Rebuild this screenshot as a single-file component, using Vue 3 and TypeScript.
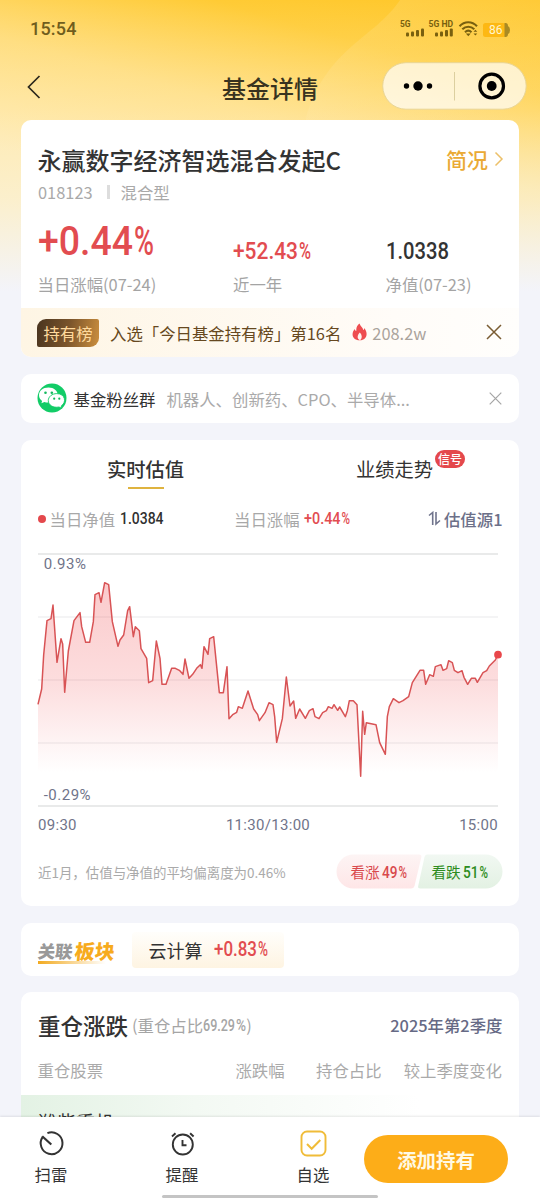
<script setup lang="ts">
import { computed, defineComponent, h } from 'vue'

/* Condensed figures: glyphs are fitted to a fixed run width. */
const Num = defineComponent({
  props: {
    text: { type: String, required: true },
    pct: { type: Number, default: 0 },
    width: { type: Number, required: true },
    size: { type: Number, required: true },
    weight: { type: Number, default: 500 },
  },
  setup(p) {
    return () => {
      const base = Math.round(p.size * 0.8)
      const run = (x: number, w: number, t: string, weight: number) =>
        h('text', {
          x, y: base, textLength: w, lengthAdjust: 'spacingAndGlyphs', fill: 'currentColor',
          'font-family': 'Roboto, sans-serif', 'font-size': p.size, 'font-weight': weight,
        }, t)
      const main = p.width - p.pct
      return h('svg', { width: p.width, height: Math.round(p.size), style: { display: 'block', overflow: 'visible', flex: 'none' } }, [
        run(0, p.pct ? main - 1 : main, p.text, p.weight),
        p.pct ? run(main, p.pct, '%', p.weight) : null,
      ])
    }
  },
})

const series: [number, number][] = [
  [0,451],[11,405],[17,303],[27,200],[39,194],[45,153],[57,325],[69,254],[74,270],[80,415],[91,291],[108,200],[126,176],[131,218],[143,265],[155,265],[166,203],[171,122],[183,116],[189,145],[200,86],[212,92],[223,203],[240,277],[246,258],[257,243],[269,170],[275,158],[286,248],[292,218],[304,230],[309,284],[326,313],[332,386],[344,380],[355,261],[366,313],[372,391],[384,391],[401,343],[412,343],[424,349],[435,361],[441,315],[453,373],[464,361],[476,343],[487,332],[492,343],[498,278],[510,301],[515,254],[527,248],[544,416],[556,416],[567,338],[573,494],[584,482],[596,475],[601,458],[613,463],[630,411],
  [647,465],[659,482],[664,500],[681,476],[693,446],[705,452],[710,488],[716,565],[733,494],[745,369],[756,456],[767,441],[773,493],[785,465],[802,493],[814,470],[825,464],[831,488],[843,494],[854,476],[865,470],[871,458],[882,463],[888,452],[899,469],[905,459],[922,488],[928,470],[934,440],[946,440],[957,452],[968,667],[974,472],[980,541],[985,506],[1014,512],[1025,566],[1042,601],[1048,488],[1054,458],[1066,434],[1083,446],[1095,440],[1112,428],[1123,386],[1146,349],[1157,349],[1163,391],[1175,362],[1186,367],[1192,338],[1209,332],[1215,349],[1226,344],[1232,320],[1243,326],[1249,349],[1260,356],[1272,350],[1278,370],[1289,391],[1300,373],[1312,373],[1318,385],[1335,356],[1346,350],[1354,336],[1372,318],[1380,302],
]
const line = computed(() => 'M' + series.map(p => p.join(' ')).join('L'))
const area = computed(() => line.value + 'L1380 667L0 667Z')
</script>

<template>
  <div class="page">
    <svg class="glow" width="540" height="300" viewBox="0 0 540 300">
      <defs>
        <linearGradient id="arc" x1="0" y1="0" x2="0.3" y2="1">
          <stop offset="0" stop-color="#fff" stop-opacity=".14" />
          <stop offset=".6" stop-color="#fff" stop-opacity="0" />
        </linearGradient>
      </defs>
      <path d="M400 0C375 38 326 48 306 118V300H540V0Z" fill="url(#arc)" />
    </svg>
    <header class="top">
      <div class="status">
        <span class="time">15:54</span>
        <svg class="sig" width="112" height="22" viewBox="0 0 112 22" fill="#79600f">
          <text x="0" y="8.500" class="net" textLength="10.500" lengthAdjust="spacingAndGlyphs">5G</text>
          <rect x="6" y="14.500" width="3" height="4" rx="1" /><rect x="11" y="13.500" width="3" height="5" rx="1" /><rect x="16" y="12" width="3" height="6.500" rx="1" /><rect x="21" y="10.500" width="3" height="8" rx="1" />
          <text x="28.500" y="8.500" class="net" textLength="24.500" lengthAdjust="spacingAndGlyphs">5G HD</text>
          <rect x="35" y="14.500" width="3" height="4" rx="1" /><rect x="40" y="13.500" width="3" height="5" rx="1" /><rect x="45" y="12" width="3" height="6.500" rx="1" /><rect x="49.800" y="10.500" width="3" height="8" rx="1" />
          <g fill="none" stroke="#79600f" stroke-width="2.1">
            <path d="M59.500 8.200C64.500 2.900 72 2.900 77 8.200" /><path d="M62.300 11.300C65.800 7.800 70.800 7.800 74.300 11.300" /><path d="M65 14.200C67 12.300 69.500 12.300 71.500 14.200" />
          </g>
          <path d="M65.800 15.600H70.800L68.300 18.300ZM73.500 13.800L75.400 11.800L77.300 13.800ZM73.500 15.600L75.400 17.600L77.300 15.600Z" />
          <rect x="83" y="5" width="22.500" height="14" rx="2.500" fill="#fdb813" />
          <path d="M104.500 5H105.500Q108 5 108 8Q110 9 110 12Q110 15 108 16Q108 19 105.500 19H104.500Z" fill="#a98a24" />
          <text x="89" y="16.300" class="bat">86</text>
        </svg>
      </div>
      <div class="nav">
        <svg class="back" width="16" height="26" viewBox="0 0 16 26"><path d="M13.500 2L2.500 13L13.500 24" fill="none" stroke="#2c281c" stroke-width="1.700" /></svg>
        <h1>基金详情</h1>
        <svg class="capsule" width="145" height="48" viewBox="0 0 145 48">
          <rect x=".7" y=".7" width="143.500" height="46.500" rx="23.250" fill="#fff" fill-opacity=".7" stroke="#e9d595" stroke-width="1" />
          <path d="M72.500 10V38.500" stroke="#dccf9f" /><circle cx="24.500" cy="24" r="2.700" /><circle cx="36" cy="24" r="4.700" /><circle cx="47.500" cy="24" r="2.700" />
          <circle cx="109.700" cy="24" r="11.800" fill="none" stroke="#000" stroke-width="3.200" /><circle cx="109.700" cy="24" r="4.900" />
        </svg>
      </div>
    </header>

    <main>
      <section class="card fund">
        <div class="row name"><h2>永赢数字经济智选混合发起C</h2>
          <span class="brief">简况<svg width="10" height="16" viewBox="0 0 10 16"><path d="M1.500 1.500L8 8L1.500 14.500" fill="none" stroke="#ecc06a" stroke-width="1.500" /></svg></span>
        </div>
        <div class="code"><span>018123</span><i></i><span>混合型</span></div>
        <div class="stats">
          <div><div class="val up"><Num text="+0.44" :pct="20" :width="116" :size="41.5" /></div><p>当日涨幅(07-24)</p></div>
          <div><div class="val small up"><Num text="+52.43" :pct="12" :width="78" :size="24.800" /></div><p>近一年</p></div>
          <div><div class="val small"><Num text="1.0338" :width="63" :size="24.800" /></div><p>净值(07-23)</p></div>
        </div>
        <div class="banner">
          <span class="tag">持有榜</span><span class="rank">入选「今日基金持有榜」第16名</span>
          <svg class="fire" width="15" height="18" viewBox="0 0 15 18"><path d="M7.500 .4C8.500 3.400 11 4.300 11.200 7C12 6.600 12.200 5.800 12.200 5C16.800 10.500 14.500 17 7.800 17.300C0 17.300-1.200 10.200 2.800 6C3 7.200 3.300 7.700 4.300 8C4 4.500 5.200 2 7.500 .4Z" fill="#ee4d50" /><path d="M7.800 9.500C9.500 11.300 11 14.700 8 17.300C4.500 15.700 5.300 12 7.800 9.500Z" fill="#fff2ee" /></svg>
          <span class="heat">208.2w</span>
          <svg class="x" width="16" height="16" viewBox="0 0 16 16"><path d="M1 1L15 15M15 1L1 15" stroke="#7a5c33" stroke-width="1.500" /></svg>
        </div>
      </section>

      <section class="card group">
        <svg width="30" height="30" viewBox="0 0 30 30">
          <circle cx="15" cy="15" r="14.500" fill="#12cc67" />
          <path d="M11.500 4.600C5.800 4.600 2 8 2 12.200C2 14.500 3.200 16.500 5.100 17.900L4.400 20.300L7.400 18.900C12.500 20.800 21 18 20.800 12C20.600 8 17 4.600 11.500 4.600Z" fill="#fff" />
          <path d="M19.800 10.600C15 10.600 11.300 13.700 11.300 17.600C11.300 22 16 25.200 22 24L24.800 25.300L24.200 23C29.800 19.500 28.400 10.600 19.800 10.600Z" fill="#fff" stroke="#12cc67" stroke-width=".9" />
          <g fill="#12b95d"><circle cx="8.500" cy="9.800" r="1.300" /><circle cx="14.800" cy="9.800" r="1.300" /><circle cx="17.200" cy="15.700" r="1.100" /><circle cx="22.300" cy="15.700" r="1.100" /></g>
        </svg>
        <b>基金粉丝群</b><span>机器人、创新药、CPO、半导体...</span>
        <svg class="x" width="13" height="13" viewBox="0 0 13 13"><path d="M.7 .7L12.300 12.300M12.300 .7L.7 12.300" stroke="#a5a5a5" stroke-width="1.200" /></svg>
      </section>

      <section class="card chart">
        <nav class="tabs"><span class="on">实时估值</span><span class="perf">业绩走势<em>信号</em></span></nav>
        <div class="legend">
          <i class="dot"></i><span>当日净值</span><Num class="dark" text="1.0384" :width="43.5" :size="16.8" />
          <span class="l2">当日涨幅</span><Num class="up" text="+0.44" :pct="8.500" :width="46" :size="16.8" />
          <span class="src"><svg width="13" height="15" viewBox="0 0 13 15"><path d="M1 4.500L4.700 1.500V14M8 1V13L12 9.500" fill="none" stroke="#70748c" stroke-width="1.600" /></svg>估值源1</span>
        </div>
        <div class="plot">
          <svg width="460" height="252" viewBox="0 0 1380 756">
            <defs><linearGradient id="fade" gradientUnits="userSpaceOnUse" x1="0" y1="60" x2="0" y2="656"><stop offset="0" stop-color="#f04448" stop-opacity=".29" /><stop offset=".55" stop-color="#f04448" stop-opacity=".18" /><stop offset="1" stop-color="#f04448" stop-opacity="0" /></linearGradient></defs>
            <path d="M0 189H1380M0 378H1380M0 567H1380" stroke="#f1f1f2" stroke-width="4" />
            <path d="M0 0H1380M0 756H1380" stroke="#e2e3e4" stroke-width="4" />
            <path :d="area" fill="url(#fade)" />
            <path :d="line" fill="none" stroke="#d85355" stroke-width="4.500" stroke-linejoin="round" />
            <circle cx="1380" cy="302" r="11.500" fill="#e9474b" />
          </svg>
          <span class="hi">0.93%</span><span class="lo">-0.29%</span>
        </div>
        <div class="axis"><span>09:30</span><span>11:30/13:00</span><span>15:00</span></div>
        <div class="vote">
          <p>近1月，估值与净值的平均偏离度为0.46%</p>
          <div class="pills">
            <svg width="167" height="35" viewBox="0 0 167 35">
              <defs>
                <linearGradient id="pr" x2="0" y2="1"><stop stop-color="#fdf4f4" /><stop offset="1" stop-color="#fee6e7" /></linearGradient>
                <linearGradient id="pg" x2="0" y2="1"><stop stop-color="#f1f8f2" /><stop offset="1" stop-color="#e3f1e3" /></linearGradient>
              </defs>
              <path d="M17.500 .5H83Q86 .5 85.300 3.200L78.500 32Q77.800 34.500 75 34.500H17.500A17 17 0 0 1 17.500 .5Z" fill="url(#pr)" />
              <path d="M91 .5H149.500A17 17 0 0 1 149.500 34.500H84.500Q81.500 34.500 82.200 32L88.500 3Q89 .5 91 .5Z" fill="url(#pg)" />
            </svg>
            <div class="votes"><span class="bull">看涨<Num text="49" :pct="8.500" :width="25" :size="17" /></span><span class="bear">看跌<Num text="51" :pct="8.500" :width="25" :size="17" /></span></div>
          </div>
        </div>
      </section>

      <section class="card sector">
        <div class="brand"><span>关联</span><b>板块</b><i></i></div>
        <div class="chip">云计算<Num class="up" text="+0.83" :pct="10" :width="54" :size="20" /></div>
      </section>

      <section class="card hold">
        <div class="row head"><h3>重仓涨跌</h3><span class="ratio">(重仓占比<Num text="69.29" :pct="10" :width="43" :size="16.8" />)</span><span class="season">2025年第2季度</span></div>
        <div class="cols"><span>重仓股票</span><span>涨跌幅</span><span>持仓占比</span><span>较上季度变化</span></div>
        <div class="stock">潍柴重机</div>
      </section>
    </main>

    <footer>
      <div class="act"><svg width="28" height="28" viewBox="0 0 28 28" fill="none" stroke="#333" stroke-width="2"><path d="M10.400 4.200A10.900 10.900 0 1 1 5.600 8.100" /><path d="M5.200 7.200L14.300 15.500" stroke-width="2.200" /></svg>扫雷</div>
      <div class="act"><svg width="28" height="28" viewBox="0 0 28 28" fill="none" stroke="#333" stroke-width="1.900"><circle cx="14.800" cy="15.500" r="10" /><path d="M14.500 11V16.300H18.500M4 7.500L7.500 4.200M25.600 7.500L22.100 4.200" /></svg>提醒</div>
      <div class="act"><svg width="28" height="28" viewBox="0 0 28 28" fill="none" stroke="#f0bc38" stroke-width="1.900"><rect x="2.500" y="2.500" width="24" height="24" rx="5.500" /><path d="M8 15L12.700 19.800L21.300 11" stroke-width="2" /></svg>自选</div>
      <button>添加持有</button>
      <div class="home"></div>
    </footer>
  </div>
</template>

<style>
body { margin: 0; }
</style>
<style scoped>
* { box-sizing: border-box; }
h1, h2, h3, p { margin: 0; font-weight: 500; }
i, em { font-style: normal; }
svg { display: block; flex: none; }
.page { position: relative; display: flex; flex-direction: column; width: 540px; height: 1200px; overflow: hidden; color: #333; font: 16.4px/24px "Noto Sans CJK SC", sans-serif;
  background: linear-gradient(180deg, rgba(255,246,220,0) 0, rgba(255,246,220,.3) 110px, rgba(249,245,230,.65) 200px, #f3f4fa 292px), linear-gradient(196deg, #ffc627 0, #ffcb35 90px, #ffdb76 185px, #ffe59e 290px) #f3f4fa; }
.glow { position: absolute; left: 0; top: 0; }
.top { position: relative; flex: none; height: 120px; }
.status { display: flex; justify-content: space-between; height: 62px; padding: 18px 28px 0 30px; }
.time { color: #705d1d; font: 500 18px/22px Roboto, sans-serif; letter-spacing: .2px; }
.net { font: 700 8.600px Roboto, sans-serif; }
.bat { font: 400 12px Roboto, sans-serif; fill: #fff6d0; }
.nav { display: grid; grid-template-columns: 196px 1fr 145px; align-items: start; padding: 0 12px 0 26px; height: 48px; }
.nav h1 { color: #38331f; font-size: 24px; line-height: 52px; }
.nav .capsule { margin-left: -1px; }
.nav .back { margin-top: 12px; }
main { position: relative; flex: 1; min-height: 0; overflow: hidden; display: flex; flex-direction: column; gap: 16.5px; padding: 0 21px; }
.card { flex: none; background: #fff; border-radius: 10px; overflow: hidden; }
.row { display: flex; align-items: center; }
.up { color: #e24c50; }
.fund { height: 237px; }
.name { height: 34px; margin: 23px 15px 0 16.500px; justify-content: space-between; }
h2 { font-size: 24px; color: #333; }
.brief { display: flex; align-items: center; gap: 6px; height: 30px; margin-top: -3px; font-size: 21px; font-weight: 500; color: #eaaa35; }
.code { display: flex; align-items: center; height: 24px; margin: 3px 17px 0 17px; color: #a9a9a9; }
.code i { width: 3px; height: 14px; margin: 0 11px 0 14px; background: #ddd; }
.stats { display: grid; grid-template-columns: 195.500px 152.500px 1fr; margin-left: 16.500px; height: 103.500px; }
.stats p { color: #a4a4a4; line-height: 24px; font-weight: 400; margin-top: 1px; }
.val { display: flex; align-items: flex-start; height: 67px; padding-top: 18px; }
.val.small { padding-top: 35px; }
.banner { display: flex; align-items: center; height: 49.500px; padding: 1px 17px 0 16px; background: linear-gradient(90deg, #fef5e4, #fffcf8 75%, #fffefc); }
.tag { width: 62px; height: 28px; border-radius: 9px 2px 9px 2px; text-align: center; line-height: 28px; color: #ffd99c; background: linear-gradient(100deg, #49341f, #7a542b 50%, #cc8f3e); }
.rank { margin-left: 11px; color: #664820; }
.fire { margin: -2px 5px 0 11px; }
.heat { color: #aaa39c; }
.banner .x { margin: -2px 0 0 auto; }
.x { margin-left: auto; }
.group { display: flex; align-items: center; height: 49.500px; padding: 1px 17px 0 15.500px; }
.group > svg:first-child { margin-top: -2px; }
.group b { margin-left: 7px; font-weight: 400; }
.group span { margin-left: 11px; color: #aaa; }
.chart { height: 466.500px; padding: 0 17px; }
.tabs { display: flex; height: 49px; padding: 15px 0 0 69px; font-size: 19.300px; line-height: 28px; }
.on { font-weight: 500; width: 78px; height: 34px; background: linear-gradient(#dfb33f, #dfb33f) center bottom / 36px 2px no-repeat; }
.perf { position: relative; margin-left: 171px; }
.perf em { position: absolute; left: 79px; top: -5px; width: 30px; height: 18px; border-radius: 9px; background: #e4484c; color: #fff; font-size: 12px; font-weight: 500; line-height: 18px; text-align: center; }
.legend { display: flex; align-items: center; height: 60px; color: #a8a8a8; }
.dot { width: 8px; height: 8px; margin-right: 4px; margin-left: -.5px; border-radius: 50%; background: #e4484c; }
.dark { color: #303030; margin: 2px 0 0 5px; }
.l2 { margin-left: 70.500px; }
.legend .up { margin: 2px 0 0 4.500px; }
.src { display: flex; align-items: center; gap: 3px; margin: 0 -.5px 0 auto; color: #6c7089; font-weight: 500; }
.plot { position: relative; height: 252px; margin: 5px 0 0 -.3px; }
.plot svg { overflow: visible; }
.plot span, .axis { font: 400 15px/18px Roboto, sans-serif; letter-spacing: .3px; color: #70748a; }
.plot span { position: absolute; left: 6px; letter-spacing: .5px; }
.plot .hi { top: 1px; }
.plot .lo { bottom: 2px; }
.axis { display: flex; justify-content: space-between; height: 38px; padding: 10px 4px 0 0; }
.vote { display: flex; justify-content: space-between; align-items: center; height: 56px; margin-right: -.5px; }
.vote p { font-size: 13.450px; font-weight: 400; color: #aaa; }
.pills { display: grid; grid-template-columns: 167px; }
.pills > * { grid-area: 1 / 1; }
.votes { display: flex; align-items: center; padding: 1px 0 0 15px; font-size: 14.600px; }
.votes span { display: flex; align-items: center; gap: 2px; }
.bull { width: 81px; color: #d9494c; }
.bear { color: #2c8c20; }
.sector { display: flex; align-items: center; height: 53px; padding: 1px 17px 0; }
.brand { display: grid; grid-template-columns: 37px 42px; grid-template-rows: 22px 3px; margin-top: 3px; font-weight: 900; line-height: 24px; }
.brand span { color: #999; font-size: 17.400px; transform: skewX(-6deg); }
.brand b { color: #f7ab1d; font-size: 20px; transform: skewX(-6deg); }
.brand i { grid-column: 1 / 3; width: 68px; height: 3px; background: linear-gradient(90deg, #f2aa20, rgba(255,200,80,0)); }
.chip { display: flex; align-items: center; gap: 11px; width: 152px; height: 36px; margin-left: 15px; padding-left: 16.500px; border-radius: 4px; font-size: 18px; background: linear-gradient(#fffefb, #fef4e2); }
.chip .up { margin-top: 1px; }
.hold { height: 200px; }
.head { height: 34px; margin: 16px 16.500px 0 17px; }
h3 { font-size: 22.500px; }
.ratio { display: flex; align-items: center; margin-left: 4px; color: #a5a5a5; }
.ratio svg { margin-top: 2px; }
.season { margin-left: auto; color: #666a85; font-weight: 500; }
.cols { display: grid; grid-template-columns: 1fr auto auto auto; column-gap: 31.500px; height: 53px; padding: 16px 17px 0 16.500px; color: #aaa; }
.cols span:last-child { margin-left: -9.500px; }
.stock { height: 80px; padding: 12px 17px; font-size: 19px; line-height: 30px; background: linear-gradient(90deg, #e3f2e4, #f3f9f3 35%, #fff 80%); }
footer { position: relative; flex: none; display: flex; height: 83px; background: #fff; box-shadow: 0 -1px 2px rgba(0,0,0,.09); }
.act { display: flex; flex-direction: column; align-items: center; gap: 5px; padding-top: 12px; }
.act:first-child { width: 102px; }
.act:nth-child(2) { width: 160px; }
.act:nth-child(3) { width: 102px; }
button { width: 144px; height: 48px; margin-top: 18px; border: 0; border-radius: 24px; padding: 1px 0 0; color: #fff9e4; background: #fdad18; font: 600 19.400px/47px "Noto Sans CJK SC", sans-serif; }
.home { position: absolute; left: 162px; bottom: 2px; width: 216px; height: 3px; border-radius: 2px; background: #c4c4c4; }
</style>
